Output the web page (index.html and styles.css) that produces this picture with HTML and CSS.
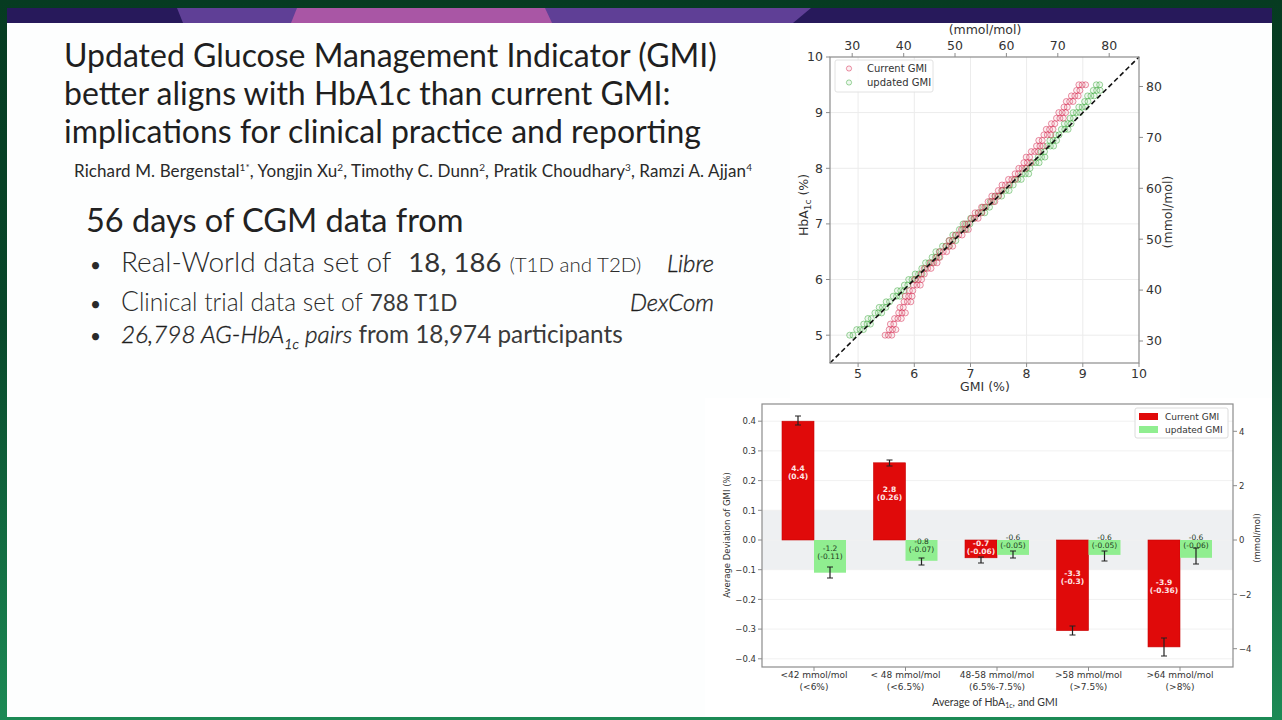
FILE: index.html
```html
<!DOCTYPE html>
<html lang="en">
<head>
<meta charset="utf-8">
<title>Updated GMI</title>
<link rel="stylesheet" href="styles.css">
</head>
<body>
<div class="slide">
  <svg class="banner" viewBox="7 8 1265 15" preserveAspectRatio="none">
    <rect x="7" y="8" width="1265" height="15" fill="#27195b"/>
    <polygon points="177,8 811,8 793,23 183,23" fill="#5f3f96"/>
    <polygon points="297,8 545,8 552,23 291,23" fill="#a956a5"/>
  </svg>
  <div class="content">
    <div class="text-col">
      <h1 class="title">Updated Glucose Management Indicator (GMI)<br>better aligns with HbA1c than current GMI:<br>implications for clinical practice and reporting</h1>
      <p class="authors">Richard M. Bergenstal<sup>1*</sup>, Yongjin Xu<sup>2</sup>, Timothy C. Dunn<sup>2</sup>, Pratik Choudhary<sup>3</sup>, Ramzi A. Ajjan<sup>4</sup></p>
      <h2 class="lead">56 days of CGM data from</h2>
      <ul class="points">
        <li class="row1"><span class="dot">•</span><span class="light l1">Real-World data set of</span><span class="big">18, 186</span><span class="small">(T1D and T2D)</span><span class="brand">Libre</span></li>
        <li class="row2"><span class="dot">•</span><span class="light l2"><span class="cap">C</span>linical trial data set of</span><span class="mid">788 T1D</span><span class="brand">DexCom</span></li>
        <li class="row3"><span class="dot">•</span><span class="mid"><em>26,798 AG-HbA<sub>1c</sub> pairs</em> from 18,974 participants</span></li>
      </ul>
    </div>

    <svg class="scatter" viewBox="790 23 390 375" width="390" height="375">
      <rect x="790" y="23" width="390" height="375" fill="#fff"/>
      <g class="grid">
        <line x1="858.1" y1="57" x2="858.1" y2="363"/>
        <line x1="914.3" y1="57" x2="914.3" y2="363"/>
        <line x1="970.5" y1="57" x2="970.5" y2="363"/>
        <line x1="1026.6" y1="57" x2="1026.6" y2="363"/>
        <line x1="1082.8" y1="57" x2="1082.8" y2="363"/>
        <line x1="830" y1="335.2" x2="1139" y2="335.2"/>
        <line x1="830" y1="279.5" x2="1139" y2="279.5"/>
        <line x1="830" y1="223.9" x2="1139" y2="223.9"/>
        <line x1="830" y1="168.3" x2="1139" y2="168.3"/>
        <line x1="830" y1="112.6" x2="1139" y2="112.6"/>
      </g>
      <g id="pts-upd" class="pts-upd"></g>
      <g id="pts-cur" class="pts-cur"></g>
      <line class="diag" x1="830" y1="363" x2="1139" y2="57"/>
      <rect class="frame" x="830" y="57" width="309" height="306"/>
      <g class="ticks">
        <line x1="858.1" y1="363" x2="858.1" y2="367"/>
        <line x1="914.3" y1="363" x2="914.3" y2="367"/>
        <line x1="970.5" y1="363" x2="970.5" y2="367"/>
        <line x1="1026.6" y1="363" x2="1026.6" y2="367"/>
        <line x1="1082.8" y1="363" x2="1082.8" y2="367"/>
        <line x1="1139" y1="363" x2="1139" y2="367"/>
        <line x1="826" y1="335.2" x2="830" y2="335.2"/>
        <line x1="826" y1="279.5" x2="830" y2="279.5"/>
        <line x1="826" y1="223.9" x2="830" y2="223.9"/>
        <line x1="826" y1="168.3" x2="830" y2="168.3"/>
        <line x1="826" y1="112.6" x2="830" y2="112.6"/>
        <line x1="826" y1="57" x2="830" y2="57"/>
        <line x1="852.2" y1="53" x2="852.2" y2="57"/>
        <line x1="903.7" y1="53" x2="903.7" y2="57"/>
        <line x1="955" y1="53" x2="955" y2="57"/>
        <line x1="1006.4" y1="53" x2="1006.4" y2="57"/>
        <line x1="1057.8" y1="53" x2="1057.8" y2="57"/>
        <line x1="1109.2" y1="53" x2="1109.2" y2="57"/>
        <line x1="1139" y1="341" x2="1143" y2="341"/>
        <line x1="1139" y1="290.1" x2="1143" y2="290.1"/>
        <line x1="1139" y1="239.2" x2="1143" y2="239.2"/>
        <line x1="1139" y1="188.3" x2="1143" y2="188.3"/>
        <line x1="1139" y1="137.4" x2="1143" y2="137.4"/>
        <line x1="1139" y1="86.5" x2="1143" y2="86.5"/>
      </g>
      <g class="tl tl-mid">
        <text x="858.1" y="378">5</text>
        <text x="914.3" y="378">6</text>
        <text x="970.5" y="378">7</text>
        <text x="1026.6" y="378">8</text>
        <text x="1082.8" y="378">9</text>
        <text x="1139" y="378">10</text>
        <text x="852.2" y="49.5">30</text>
        <text x="903.7" y="49.5">40</text>
        <text x="955" y="49.5">50</text>
        <text x="1006.4" y="49.5">60</text>
        <text x="1057.8" y="49.5">70</text>
        <text x="1109.2" y="49.5">80</text>
        <text x="985" y="34">(mmol/mol)</text>
        <text x="985" y="391">GMI (%)</text>
      </g>
      <g class="tl tl-end">
        <text x="823" y="339.5">5</text>
        <text x="823" y="283.8">6</text>
        <text x="823" y="228.2">7</text>
        <text x="823" y="172.6">8</text>
        <text x="823" y="116.9">9</text>
        <text x="823" y="61.3">10</text>
      </g>
      <g class="tl tl-start">
        <text x="1146" y="345.3">30</text>
        <text x="1146" y="294.4">40</text>
        <text x="1146" y="243.5">50</text>
        <text x="1146" y="192.6">60</text>
        <text x="1146" y="141.7">70</text>
        <text x="1146" y="90.8">80</text>
      </g>
      <text class="tl tl-mid" transform="translate(808 205) rotate(-90)">HbA<tspan class="sub" dy="3">1c</tspan><tspan dy="-3"> (%)</tspan></text>
      <text class="tl tl-mid" transform="translate(1172 212) rotate(-90)">(mmol/mol)</text>
      <g class="legend">
        <rect x="835" y="60" width="98" height="32" rx="2"/>
        <circle class="pc" cx="849" cy="68.5" r="2.6"/>
        <circle class="pu" cx="849" cy="82.5" r="2.6"/>
        <text x="867" y="72">Current GMI</text>
        <text x="867" y="86">updated GMI</text>
      </g>
    </svg>

    <svg class="bars" viewBox="705 398 567 318" width="567" height="318">
      <rect x="705" y="398" width="567" height="318" fill="#fff"/>
      <rect class="band" x="762" y="510.3" width="471" height="59.4"/>
      <g class="bgrid">
        <line x1="762" y1="421.2" x2="1233" y2="421.2"/>
        <line x1="762" y1="450.9" x2="1233" y2="450.9"/>
        <line x1="762" y1="480.6" x2="1233" y2="480.6"/>
        <line x1="762" y1="510.3" x2="1233" y2="510.3"/>
        <line x1="762" y1="540" x2="1233" y2="540"/>
        <line x1="762" y1="569.7" x2="1233" y2="569.7"/>
        <line x1="762" y1="599.4" x2="1233" y2="599.4"/>
        <line x1="762" y1="629.1" x2="1233" y2="629.1"/>
        <line x1="762" y1="658.8" x2="1233" y2="658.8"/>
      </g>
      <g class="red">
        <rect x="782" y="421.2" width="32" height="118.8"/>
        <rect x="873.5" y="462.8" width="32" height="77.2"/>
        <rect x="965" y="540" width="32" height="17.8"/>
        <rect x="1056.5" y="540" width="32" height="90.6"/>
        <rect x="1148" y="540" width="32" height="106.9"/>
      </g>
      <g class="green">
        <rect x="814" y="540" width="32" height="32.7"/>
        <rect x="905.5" y="540" width="32" height="20.8"/>
        <rect x="997" y="540" width="32" height="14.9"/>
        <rect x="1088.5" y="540" width="32" height="14.9"/>
        <rect x="1180" y="540" width="32" height="17.8"/>
      </g>
      <g class="err">
        <path d="M798 416V425M795 416H801M795 425H801"/>
        <path d="M889.5 460V466M886.5 460H892.5M886.5 466H892.5"/>
        <path d="M981 557V563M978 557H984M978 563H984"/>
        <path d="M1072.5 626V635M1069.5 626H1075.5M1069.5 635H1075.5"/>
        <path d="M1164 638V656M1161 638H1167M1161 656H1167"/>
        <path d="M830 567V578M827 567H833M827 578H833"/>
        <path d="M921.5 558V565M918.5 558H924.5M918.5 565H924.5"/>
        <path d="M1013 551V558M1010 551H1016M1010 558H1016"/>
        <path d="M1104.5 551V561M1101.5 551H1107.5M1101.5 561H1107.5"/>
        <path d="M1196 548V564M1193 548H1199M1193 564H1199"/>
      </g>
      <g class="vl vl-red">
        <text x="798" y="471">4.4</text><text x="798" y="479">(0.4)</text>
        <text x="889.5" y="492">2.8</text><text x="889.5" y="500">(0.26)</text>
        <text x="981" y="546">-0.7</text><text x="981" y="554">(-0.06)</text>
        <text x="1072.5" y="576">-3.3</text><text x="1072.5" y="584">(-0.3)</text>
        <text x="1164" y="585">-3.9</text><text x="1164" y="593">(-0.36)</text>
      </g>
      <g class="vl vl-green">
        <text x="830" y="551">-1.2</text><text x="830" y="559">(-0.11)</text>
        <text x="921.5" y="544">-0.8</text><text x="921.5" y="552">(-0.07)</text>
        <text x="1013" y="540">-0.6</text><text x="1013" y="548">(-0.05)</text>
        <text x="1104.5" y="540">-0.6</text><text x="1104.5" y="548">(-0.05)</text>
        <text x="1196" y="540">-0.6</text><text x="1196" y="548">(-0,06)</text>
      </g>
      <rect class="frame" x="762" y="404" width="471" height="263"/>
      <g class="ticks">
        <line x1="758" y1="421.2" x2="762" y2="421.2"/>
        <line x1="758" y1="450.9" x2="762" y2="450.9"/>
        <line x1="758" y1="480.6" x2="762" y2="480.6"/>
        <line x1="758" y1="510.3" x2="762" y2="510.3"/>
        <line x1="758" y1="540" x2="762" y2="540"/>
        <line x1="758" y1="569.7" x2="762" y2="569.7"/>
        <line x1="758" y1="599.4" x2="762" y2="599.4"/>
        <line x1="758" y1="629.1" x2="762" y2="629.1"/>
        <line x1="758" y1="658.8" x2="762" y2="658.8"/>
        <line x1="1233" y1="431.3" x2="1237" y2="431.3"/>
        <line x1="1233" y1="485.7" x2="1237" y2="485.7"/>
        <line x1="1233" y1="540" x2="1237" y2="540"/>
        <line x1="1233" y1="594.3" x2="1237" y2="594.3"/>
        <line x1="1233" y1="648.7" x2="1237" y2="648.7"/>
        <line x1="814" y1="667" x2="814" y2="671"/>
        <line x1="905.5" y1="667" x2="905.5" y2="671"/>
        <line x1="997" y1="667" x2="997" y2="671"/>
        <line x1="1088.5" y1="667" x2="1088.5" y2="671"/>
        <line x1="1180" y1="667" x2="1180" y2="671"/>
      </g>
      <g class="bt bt-end">
        <text x="756" y="424.4">0.4</text>
        <text x="756" y="454.1">0.3</text>
        <text x="756" y="483.8">0.2</text>
        <text x="756" y="513.5">0.1</text>
        <text x="756" y="543.2">0.0</text>
        <text x="756" y="572.9">−0.1</text>
        <text x="756" y="602.6">−0.2</text>
        <text x="756" y="632.3">−0.3</text>
        <text x="756" y="662">−0.4</text>
      </g>
      <g class="bt bt-start">
        <text x="1239" y="434.5">4</text>
        <text x="1239" y="488.9">2</text>
        <text x="1239" y="543.2">0</text>
        <text x="1239" y="597.5">−2</text>
        <text x="1239" y="651.9">−4</text>
      </g>
      <g class="bt bt-mid xl">
        <text x="814" y="678">&lt;42 mmol/mol</text><text x="814" y="690">(&lt;6%)</text>
        <text x="905.5" y="678">&lt; 48 mmol/mol</text><text x="905.5" y="690">(&lt;6.5%)</text>
        <text x="997" y="678">48-58 mmol/mol</text><text x="997" y="690">(6.5%-7.5%)</text>
        <text x="1088.5" y="678">&gt;58 mmol/mol</text><text x="1088.5" y="690">(&gt;7.5%)</text>
        <text x="1180" y="678">&gt;64 mmol/mol</text><text x="1180" y="690">(&gt;8%)</text>
      </g>
      <text class="xtitle" x="995" y="706">Average of HbA<tspan class="sub2" dy="2">1c</tspan><tspan dy="-2">, and GMI</tspan></text>
      <text class="bt bt-mid" transform="translate(730 535) rotate(-90)">Average Deviation of GMI (%)</text>
      <text class="bt bt-mid" transform="translate(1260 538) rotate(-90)">(mmol/mol)</text>
      <g class="blegend">
        <rect class="box" x="1135" y="408" width="93" height="30" rx="2"/>
        <rect x="1139" y="413" width="19" height="7" fill="#e00a0a"/>
        <rect x="1139" y="426" width="19" height="7" fill="#90ee90"/>
        <text x="1165" y="420">Current GMI</text>
        <text x="1165" y="433">updated GMI</text>
      </g>
    </svg>
  </div>
</div>
<script src="app.js"></script>
</body>
</html>
```

FILE: styles.css
```css
html, body {
  margin: 0;
  padding: 0;
}
body {
  width: 1282px;
  height: 720px;
  overflow: hidden;
  box-sizing: border-box;
  padding: 8px 10px 3px 7px;
  background: linear-gradient(180deg, #063b21 0%, #08472a 45%, #147245 80%, #1c8a55 100%);
  font-family: "Lato", "DejaVu Sans", sans-serif;
  color: #262626;
}
.slide {
  width: 1265px;
  height: 709px;
  background: #fdfefe;
  display: flex;
  flex-direction: column;
}
.banner {
  display: block;
  width: 1265px;
  height: 15px;
  flex: none;
}
.content {
  display: grid;
  grid-template-columns: 1fr 390px 92px;
  grid-template-rows: 375px 318px;
  flex: 1;
}
.text-col {
  grid-column: 1;
  grid-row: 1;
  padding-left: 57px;
}
.scatter {
  grid-column: 2;
  grid-row: 1;
  display: block;
}
.bars {
  grid-column: 1 / -1;
  grid-row: 2;
  justify-self: end;
  display: block;
}

/* ---------- text ---------- */
.title {
  margin: 13px 0 0;
  font-size: 32px;
  line-height: 38px;
  font-weight: 400;
  color: #1f1f1f;
}
.authors {
  margin: 12px 0 0 10px;
  font-size: 17px;
  line-height: 18px;
  letter-spacing: 0.1px;
  color: #2a2a2a;
}
.authors sup {
  font-size: 10px;
  line-height: 0;
  vertical-align: 6px;
}
.lead {
  margin: 22px 0 0 22px;
  font-size: 32.5px;
  line-height: 36px;
  font-weight: 400;
  color: #222;
}
.points {
  list-style: none;
  margin: 4px 0 0 26px;
  padding: 0;
  width: 624px;
}
.points li {
  display: flex;
  align-items: baseline;
  color: #2a2a2a;
}
.points .row1 {
  height: 40px;
  line-height: 38px;
}
.points .row2 {
  height: 36px;
  line-height: 38px;
}
.points .row3 {
  height: 32px;
  line-height: 32px;
}
.dot {
  width: 31px;
  flex: none;
  font-size: 19px;
}
.light {
  font-weight: 300;
}
.l1 {
  font-size: 28px;
  margin-right: 17px;
}
.l2 {
  font-size: 24.5px;
  margin-right: 7px;
}
.cap {
  font-size: 26.5px;
}
.big {
  font-size: 27.5px;
  margin-right: 8px;
  color: #333;
}
.small {
  font-weight: 300;
  font-size: 20.5px;
}
.mid {
  font-size: 22.5px;
  color: #3a3a3a;
}
.row3 .mid {
  font-size: 24.3px;
}
.mid em {
  font-style: italic;
  font-weight: 300;
  color: #1e1e1e;
  -webkit-text-stroke: 0.35px #1e1e1e;
}
.mid sub {
  font-size: 14px;
  line-height: 0;
}
.brand {
  margin-left: auto;
  font-style: italic;
  font-weight: 300;
  font-size: 24px;
  color: #1e1e1e;
  -webkit-text-stroke: 0.35px #1e1e1e;
}

/* ---------- scatter chart ---------- */
.grid line {
  stroke: #ececec;
  stroke-width: 1;
}
.frame {
  fill: none;
  stroke: #8c8c8c;
  stroke-width: 1.2;
}
.ticks line {
  stroke: #8c8c8c;
  stroke-width: 1;
}
.diag {
  stroke: #111;
  stroke-width: 1.6;
  stroke-dasharray: 5 3;
}
.tl {
  font-family: "DejaVu Sans", sans-serif;
  font-size: 12.5px;
  fill: #333;
}
.tl-mid { text-anchor: middle; }
.tl-end { text-anchor: end; }
.tl-start { text-anchor: start; }
.sub { font-size: 9px; }
.pts-cur circle, .pc {
  fill: rgba(230, 120, 140, 0.12);
  stroke: rgba(214, 40, 80, 0.5);
  stroke-width: 1;
}
.pts-upd circle, .pu {
  fill: rgba(120, 200, 120, 0.12);
  stroke: rgba(60, 170, 60, 0.5);
  stroke-width: 1;
}
.legend rect {
  fill: rgba(255, 255, 255, 0.85);
  stroke: #e2e2e2;
}
.legend text {
  font-family: "DejaVu Sans", sans-serif;
  font-size: 10px;
  fill: #333;
}

/* ---------- bar chart ---------- */
.band { fill: #eef0f2; }
.bgrid line {
  stroke: #f1f1f1;
  stroke-width: 1;
}
.red rect {
  fill: #e00a0a;
  stroke: #c80000;
  stroke-width: 0.6;
}
.green rect {
  fill: #90ee90;
}
.err path {
  fill: none;
  stroke: #222;
  stroke-width: 1.2;
}
.vl {
  font-family: "DejaVu Sans", sans-serif;
  font-size: 7.5px;
  text-anchor: middle;
}
.vl-red {
  fill: #ffe6e6;
  font-weight: bold;
}
.vl-green {
  fill: #1e3a1e;
}
.bt {
  font-family: "DejaVu Sans", sans-serif;
  font-size: 8.5px;
  fill: #333;
}
.bt-end { text-anchor: end; }
.bt-start { text-anchor: start; }
.bt-mid { text-anchor: middle; }
.xl { font-size: 9px; }
.xtitle {
  font-family: "Lato", sans-serif;
  font-size: 10.5px;
  fill: #333;
  text-anchor: middle;
}
.sub2 { font-size: 7px; }
.blegend .box {
  fill: #fff;
  stroke: #dcdcdc;
}
.blegend text {
  font-family: "DejaVu Sans", sans-serif;
  font-size: 9px;
  fill: #333;
}
```

FILE: app.js
```js
(function () {
  var NS = 'http://www.w3.org/2000/svg';
  function xOf(g) { return 830 + (g - 4.5) * 56.18; }
  function yOf(h) { return 363 - (h - 4.5) * 55.64; }
  function interp(pts, h) {
    for (var i = 0; i < pts.length - 1; i++) {
      var a = pts[i], b = pts[i + 1];
      if (h <= b[0] + 1e-9) {
        var t = (h - a[0]) / (b[0] - a[0]);
        return a[1] + t * (b[1] - a[1]);
      }
    }
    return pts[pts.length - 1][1];
  }
  var series = [
    { id: 'pts-upd', pts: [[5, 4.93], [6, 5.98], [7, 6.95], [8, 8.08], [9.5, 9.32]] },
    { id: 'pts-cur', pts: [[5, 5.55], [6, 6.08], [7, 6.97], [8, 7.93], [9.5, 9.0]] }
  ];
  var offs = [-0.06, 0, 0.06];
  series.forEach(function (s, si) {
    var g = document.getElementById(s.id);
    for (var k = 0; k <= 45; k++) {
      var h = 5 + k * 0.1;
      var base = interp(s.pts, h);
      var n = ((k + si) % 3 === 0) ? 2 : 3;
      for (var j = 0; j < n; j++) {
        var c = document.createElementNS(NS, 'circle');
        c.setAttribute('cx', xOf(base + offs[j] + ((k * 7 + si) % 5 - 2) * 0.01).toFixed(1));
        c.setAttribute('cy', yOf(h).toFixed(1));
        c.setAttribute('r', '3');
        g.appendChild(c);
      }
    }
  });
})();
```
